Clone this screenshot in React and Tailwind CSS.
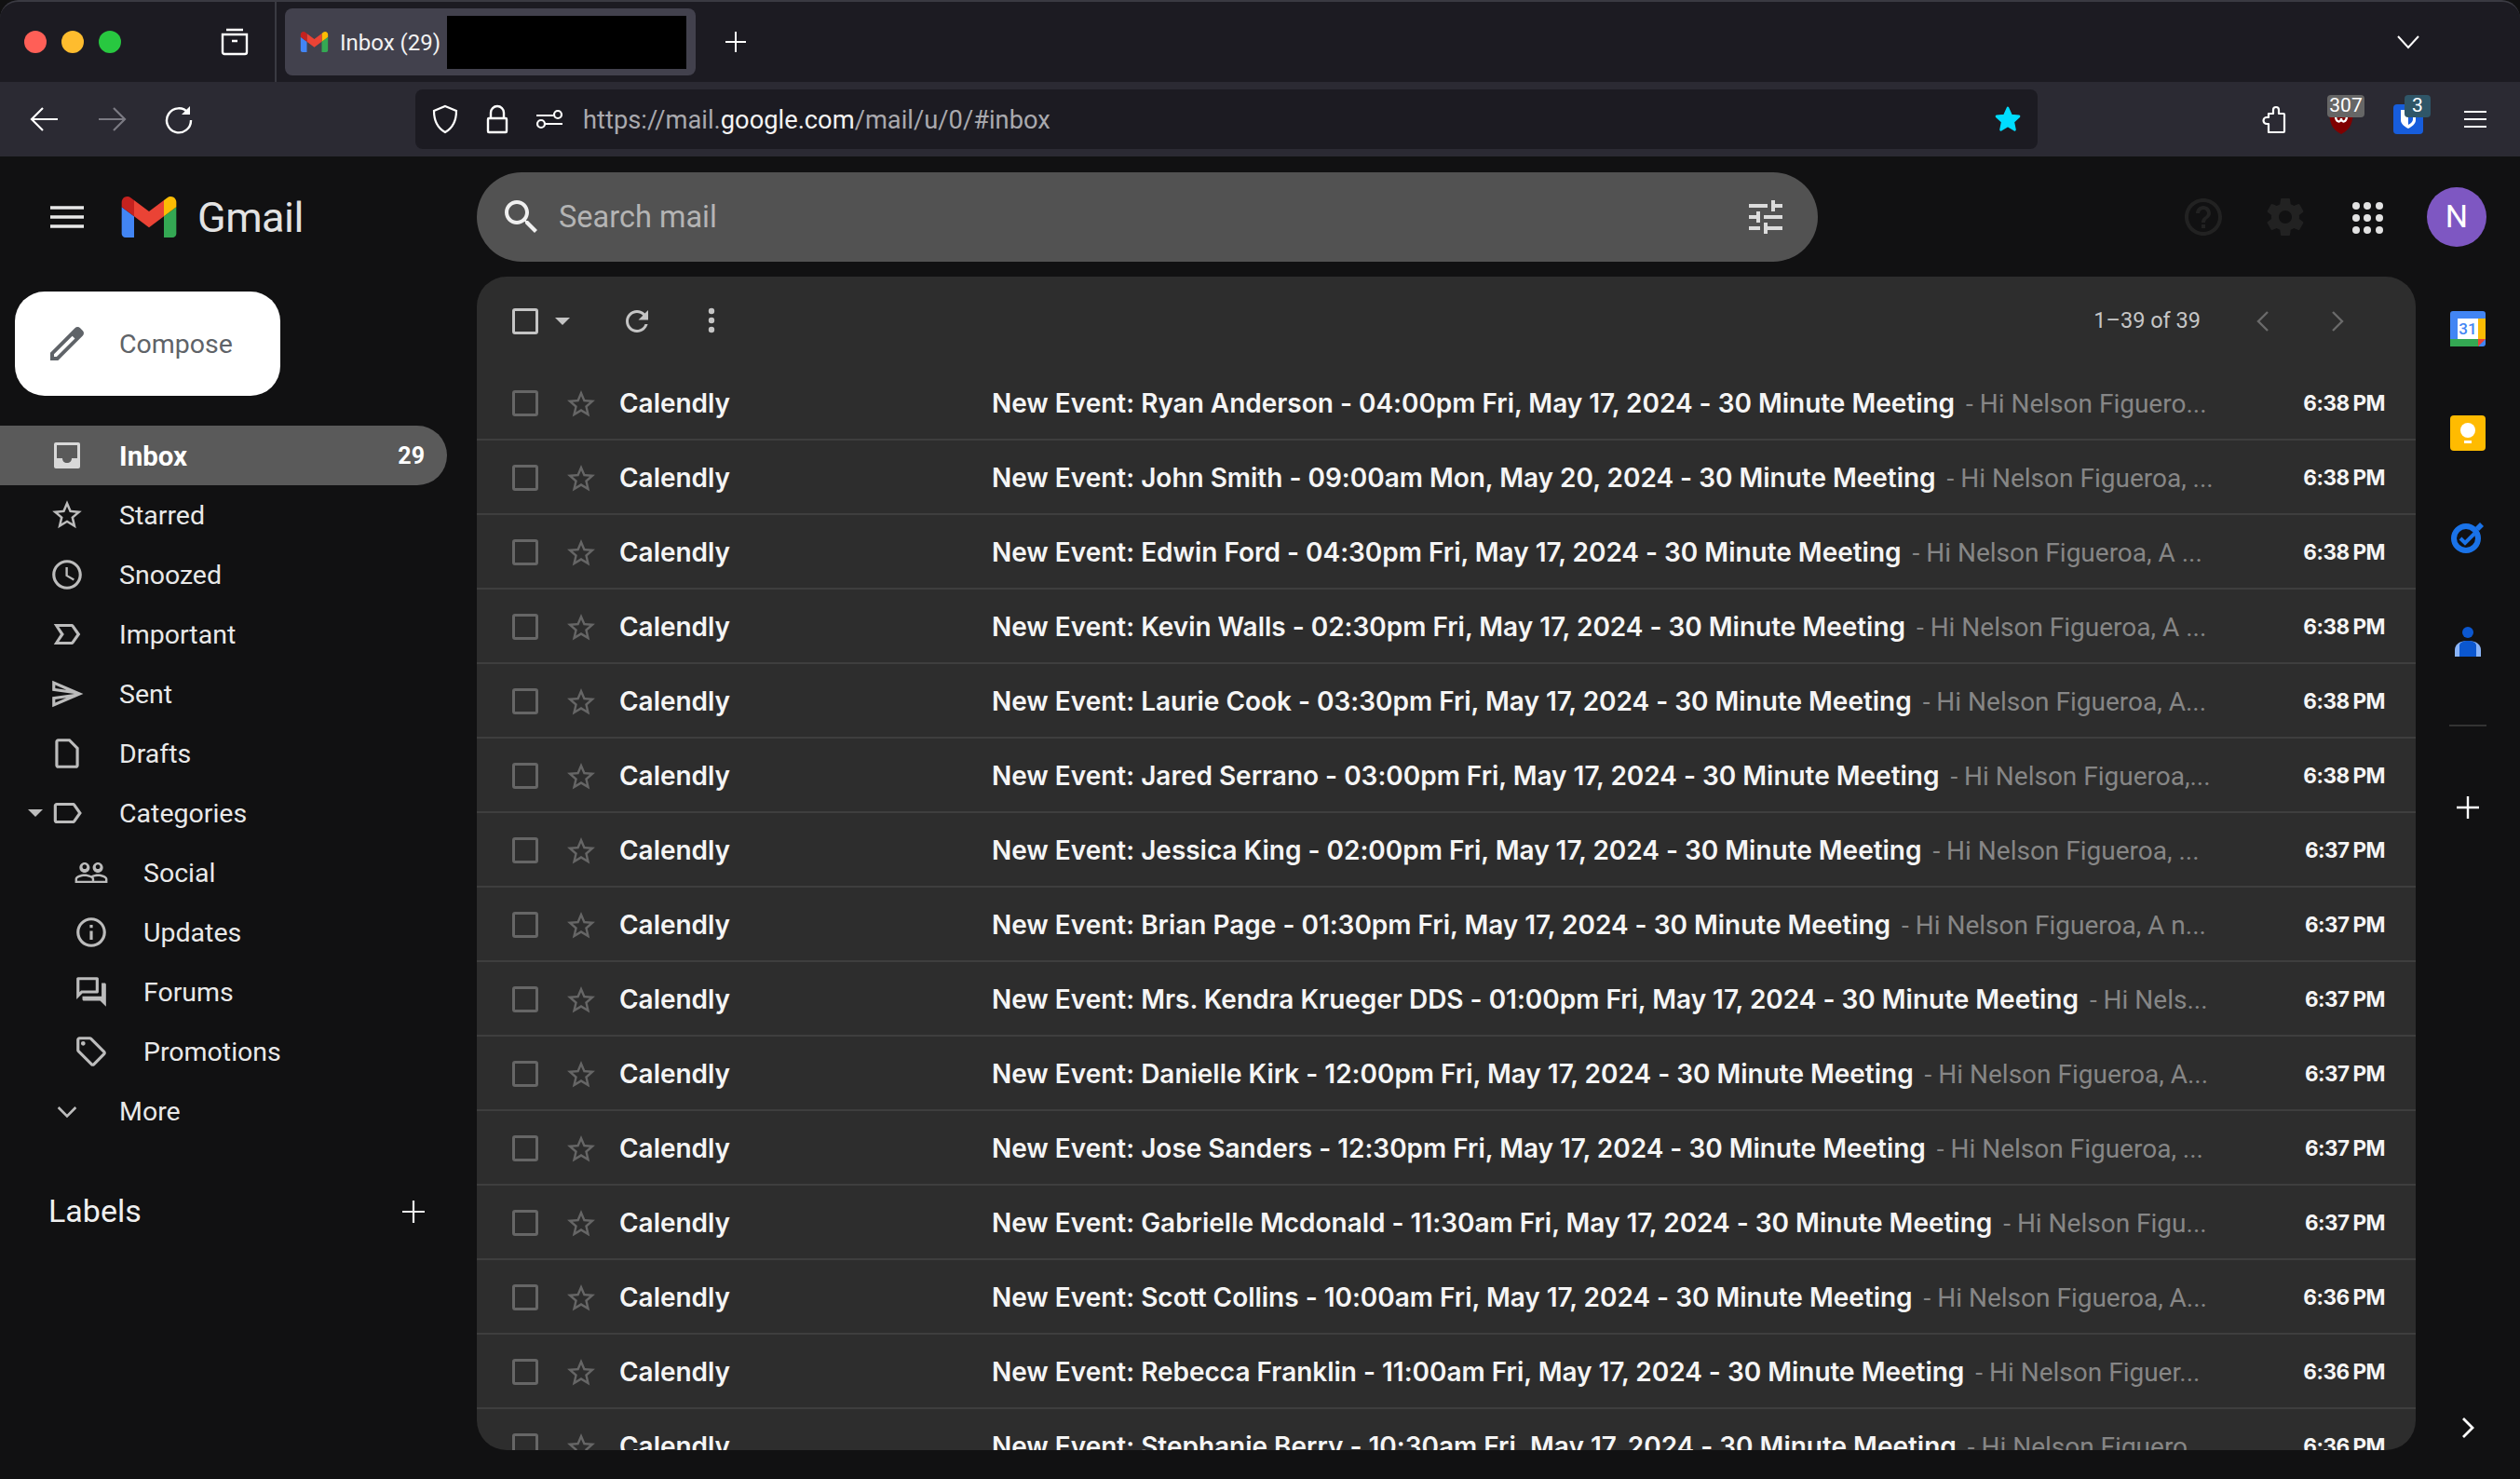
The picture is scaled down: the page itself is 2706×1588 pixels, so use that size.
import { useState } from 'react';

const SANS = 'font-["Roboto","Liberation_Sans",sans-serif]';
const BOLD = 'font-["Inter","Roboto",sans-serif]';

// Material icon paths used by the sidebar and toolbars
const PATHS = {
  star: 'M22 9.24l-7.19-.62L12 2 9.19 8.63 2 9.24l5.46 4.73L5.82 21 12 17.27 18.18 21l-1.63-7.03L22 9.24zM12 15.4l-3.76 2.27 1-4.28-3.32-2.88 4.38-.38L12 6.1l1.71 4.04 4.38.38-3.32 2.88 1 4.28L12 15.4z',
  clock: 'M11.99 2C6.47 2 2 6.48 2 12s4.47 10 9.99 10C17.52 22 22 17.52 22 12S17.52 2 11.99 2zM12 20c-4.42 0-8-3.58-8-8s3.58-8 8-8 8 3.58 8 8-3.58 8-8 8zm.5-13H11v6l5.25 3.15.75-1.23-4.5-2.67z',
  important: 'M15 19H3l4.5-7L3 5h12c.65 0 1.26.31 1.63.84L21 12l-4.37 6.16c-.37.52-.98.84-1.63.84zm-8.5-2H15l3.5-5L15 7H6.5l3.5 5-3.5 5z',
  sent: 'M4.01 6.03l7.51 3.22-7.52-1 .01-2.22m7.5 8.72L4 17.97v-2.22l7.51-1M2.01 3L2 10l15 2-15 2 .01 7L23 12 2.01 3z',
  draft: 'M14 2H6c-1.1 0-2 .9-2 2v16c0 1.1.9 2 2 2h12c1.1 0 2-.9 2-2V8l-6-6zm4 18H6V4h7.17L18 8.83V20z',
  label: 'M17.63 5.84C17.27 5.33 16.67 5 16 5L5 5.01C3.9 5.01 3 5.9 3 7v10c0 1.1.9 1.99 2 1.99L16 19c.67 0 1.27-.33 1.63-.84L22 12l-4.37-6.16zM16 17H5V7h11l3.55 5L16 17z',
  people: 'M16.5 13c-1.2 0-3.07.34-4.5 1-1.43-.67-3.3-1-4.5-1C5.33 13 1 14.08 1 16.25V19h22v-2.75c0-2.17-4.33-3.25-6.5-3.25zm-4 4.5h-10v-1.25c0-.54 2.56-1.75 5-1.75s5 1.21 5 1.75v1.25zm9 0H14v-1.25c0-.46-.2-.86-.52-1.22.88-.3 1.96-.53 3.02-.53 2.44 0 5 1.21 5 1.75v1.25zM7.5 12c1.93 0 3.5-1.57 3.5-3.5S9.43 5 7.5 5 4 6.57 4 8.5 5.57 12 7.5 12zm0-5.5c.83 0 1.5.67 1.5 1.5s-.67 1.5-1.5 1.5S6 8.83 6 8s.67-1.5 1.5-1.5zm9 5.5c1.93 0 3.5-1.57 3.5-3.5S18.43 5 16.5 5 13 6.57 13 8.5s1.57 3.5 3.5 3.5zm0-5.5c.83 0 1.5.67 1.5 1.5s-.67 1.5-1.5 1.5S15 8.83 15 8s.67-1.5 1.5-1.5z',
  info: 'M11 7h2v2h-2zm0 4h2v6h-2zm1-9C6.48 2 2 6.48 2 12s4.48 10 10 10 10-4.48 10-10S17.52 2 12 2zm0 18c-4.41 0-8-3.59-8-8s3.59-8 8-8 8 3.59 8 8-3.59 8-8 8z',
  forum: 'M15 4v7H5.17L4 12.17V4h11m1-2H3c-.55 0-1 .45-1 1v14l4-4h10c.55 0 1-.45 1-1V3c0-.55-.45-1-1-1zm5 4h-2v9H6v2c0 .55.45 1 1 1h11l4 4V7c0-.55-.45-1-1-1z',
  offer: 'M21.41 11.58l-9-9C12.05 2.22 11.55 2 11 2H4c-1.1 0-2 .9-2 2v7c0 .55.22 1.05.59 1.42l9 9c.36.36.86.58 1.41.58s1.05-.22 1.41-.59l7-7c.37-.36.59-.86.59-1.41s-.23-1.06-.59-1.42zM13 20.01L4 11V4h7v-.01l9 9-7 7.02zM6.5 5A1.5 1.5 0 1 0 6.5 8 1.5 1.5 0 1 0 6.5 5z',
  search: 'M15.5 14h-.79l-.28-.27C15.41 12.59 16 11.11 16 9.5 16 5.91 13.09 3 9.5 3S3 5.91 3 9.5 5.91 16 9.5 16c1.61 0 3.09-.59 4.23-1.57l.27.28v.79l5 4.99L20.49 19l-4.99-5zm-6 0C7.01 14 5 11.99 5 9.5S7.01 5 9.5 5 14 7.01 14 9.5 11.99 14 9.5 14z',
  tune: 'M3 17v2h6v-2H3zM3 5v2h10V5H3zm10 16v-2h8v-2h-8v-2h-2v6h2zM7 9v2H3v2h4v2h2V9H7zm14 4v-2H11v2h10zm-6-4h2V7h4V5h-4V3h-2v6z',
  refresh: 'M17.65 6.35C16.2 4.9 14.21 4 12 4c-4.42 0-7.99 3.58-7.99 8s3.57 8 7.99 8c3.73 0 6.84-2.55 7.73-6h-2.08c-.82 2.33-3.04 4-5.65 4-3.31 0-6-2.69-6-6s2.69-6 6-6c1.66 0 3.14.69 4.22 1.78L13 11h7V4l-2.35 2.35z',
  pencil: 'M20.41 4.94l-1.35-1.35c-.78-.78-2.05-.78-2.83 0L3 16.82V21h4.18L20.41 7.77c.79-.78.79-2.05 0-2.83zm-14 14.12L5 19v-1.36l9.82-9.82 1.41 1.41-9.82 9.83z',
  help: 'M11 18h2v-2h-2v2zm1-16C6.48 2 2 6.48 2 12s4.48 10 10 10 10-4.48 10-10S17.52 2 12 2zm0 18c-4.41 0-8-3.59-8-8s3.59-8 8-8 8 3.59 8 8-3.59 8-8 8zm0-14c-2.21 0-4 1.79-4 4h2c0-1.1.9-2 2-2s2 .9 2 2c0 2-3 1.75-3 5h2c0-2.25 3-2.5 3-5 0-2.21-1.79-4-4-4z',
  gear: 'M19.43 12.98c.04-.32.07-.64.07-.98s-.03-.66-.07-.98l2.11-1.65c.19-.15.24-.42.12-.64l-2-3.46c-.12-.22-.39-.3-.61-.22l-2.49 1c-.52-.4-1.08-.73-1.69-.98l-.38-2.65C14.46 2.18 14.25 2 14 2h-4c-.25 0-.46.18-.49.42l-.38 2.65c-.61.25-1.17.59-1.69.98l-2.49-1c-.23-.09-.49 0-.61.22l-2 3.46c-.13.22-.07.49.12.64l2.11 1.65c-.04.32-.07.65-.07.98s.03.66.07.98l-2.11 1.65c-.19.15-.24.42-.12.64l2 3.46c.12.22.39.3.61.22l2.49-1c.52.4 1.08.73 1.69.98l.38 2.65c.03.24.24.42.49.42h4c.25 0 .46-.18.49-.42l.38-2.65c.61-.25 1.17-.59 1.69-.98l2.49 1c.23.09.49 0 .61-.22l2-3.46c.12-.22.07-.49-.12-.64l-2.11-1.65zM12 15.5c-1.93 0-3.5-1.57-3.5-3.5s1.57-3.5 3.5-3.5 3.5 1.57 3.5 3.5-1.57 3.5-3.5 3.5z',
};

function Icon({ name, className = '' }) {
  return (
    <svg viewBox="0 0 24 24" className={className} fill="currentColor">
      <path d={PATHS[name]} />
    </svg>
  );
}

function GmailLogo({ className }) {
  return (
    <svg viewBox="52 42 88 66" className={className}>
      <path fill="#4285f4" d="M58 108h14V74L52 59v43c0 3.32 2.69 6 6 6" />
      <path fill="#34a853" d="M120 108h14c3.32 0 6-2.69 6-6V59l-20 15" />
      <path fill="#fbbc04" d="M120 48v26l20-15v-8c0-7.42-8.47-11.65-14.4-7.2" />
      <path fill="#ea4335" d="M72 74V48l24 18 24-18v26L96 92" />
      <path fill="#c5221f" d="M52 51v8l20 15V48l-5.6-4.2c-5.94-4.45-14.4-.22-14.4 7.2" />
    </svg>
  );
}

const EMAILS = [
  ['Ryan Anderson - 04:00pm Fri, May 17, 2024', 'Hi Nelson Figuero...', '6:38 PM'],
  ['John Smith - 09:00am Mon, May 20, 2024', 'Hi Nelson Figueroa, ...', '6:38 PM'],
  ['Edwin Ford - 04:30pm Fri, May 17, 2024', 'Hi Nelson Figueroa, A ...', '6:38 PM'],
  ['Kevin Walls - 02:30pm Fri, May 17, 2024', 'Hi Nelson Figueroa, A ...', '6:38 PM'],
  ['Laurie Cook - 03:30pm Fri, May 17, 2024', 'Hi Nelson Figueroa, A...', '6:38 PM'],
  ['Jared Serrano - 03:00pm Fri, May 17, 2024', 'Hi Nelson Figueroa,...', '6:38 PM'],
  ['Jessica King - 02:00pm Fri, May 17, 2024', 'Hi Nelson Figueroa, ...', '6:37 PM'],
  ['Brian Page - 01:30pm Fri, May 17, 2024', 'Hi Nelson Figueroa, A n...', '6:37 PM'],
  ['Mrs. Kendra Krueger DDS - 01:00pm Fri, May 17, 2024', 'Hi Nels...', '6:37 PM'],
  ['Danielle Kirk - 12:00pm Fri, May 17, 2024', 'Hi Nelson Figueroa, A...', '6:37 PM'],
  ['Jose Sanders - 12:30pm Fri, May 17, 2024', 'Hi Nelson Figueroa, ...', '6:37 PM'],
  ['Gabrielle Mcdonald - 11:30am Fri, May 17, 2024', 'Hi Nelson Figu...', '6:37 PM'],
  ['Scott Collins - 10:00am Fri, May 17, 2024', 'Hi Nelson Figueroa, A...', '6:36 PM'],
  ['Rebecca Franklin - 11:00am Fri, May 17, 2024', 'Hi Nelson Figuer...', '6:36 PM'],
  ['Stephanie Berry - 10:30am Fri, May 17, 2024', 'Hi Nelson Figuero...', '6:36 PM'],
];

const NAV = [
  { label: 'Starred', icon: 'star' },
  { label: 'Snoozed', icon: 'clock' },
  { label: 'Important', icon: 'important' },
  { label: 'Sent', icon: 'sent' },
  { label: 'Drafts', icon: 'draft' },
  { label: 'Categories', icon: 'label', caret: true },
  { label: 'Social', icon: 'people', sub: true },
  { label: 'Updates', icon: 'info', sub: true },
  { label: 'Forums', icon: 'forum', sub: true },
  { label: 'Promotions', icon: 'offer', sub: true },
];

function TabBar() {
  return (
    <div className="flex h-[88px] shrink-0 items-center rounded-t-[20px] border-t-2 border-[#3a3a42] bg-[#1c1b22] text-white">
      <div className="flex w-[297px] shrink-0 items-center self-stretch border-r-2 border-[#3a3a42] pl-[26px]">
        <span className="h-6 w-6 rounded-full bg-[#ff5f57]" />
        <span className="ml-4 h-6 w-6 rounded-full bg-[#febc2e]" />
        <span className="ml-4 h-6 w-6 rounded-full bg-[#28c840]" />
        <svg viewBox="0 0 32 32" className="ml-[106px] h-8 w-8" fill="none" stroke="currentColor" strokeWidth="2.4">
          <path d="M7 3h18M3 8h26v19a2 2 0 0 1-2 2H5a2 2 0 0 1-2-2zM13 15h6" />
        </svg>
      </div>
      <div className="ml-[9px] flex h-[72px] w-[441px] items-center rounded-lg bg-[#42414d] pl-4 pr-[10px]">
        <GmailLogo className="h-[22px] w-[31px] shrink-0" />
        <span className={`${SANS} ml-3 pt-[2px] text-[24px] whitespace-nowrap text-[#f2f2f2]`}>Inbox (29)</span>
        <div className="ml-auto h-[57px] w-[257px] bg-black" />
      </div>
      <svg viewBox="0 0 24 24" className="ml-[31px] h-[24px] w-[24px]" fill="none" stroke="currentColor" strokeWidth="2">
        <path d="M12 1v22M1 12h22" />
      </svg>
      <svg viewBox="0 0 24 24" className="mr-[108px] ml-auto h-[24px] w-[24px]" fill="none" stroke="currentColor" strokeWidth="2">
        <path d="M1 6l11 12L23 6" />
      </svg>
    </div>
  );
}

function AddressBar() {
  return (
    <div className="flex h-[80px] shrink-0 items-center bg-[#2b2a33] text-white">
      <svg viewBox="0 0 32 32" className="ml-[32px] h-8 w-8" fill="none" stroke="currentColor" strokeWidth="2.2">
        <path d="M30 16H3M14 4L2 16l12 12" />
      </svg>
      <svg viewBox="0 0 32 32" className="ml-10 h-8 w-8 text-[#7b7a83]" fill="none" stroke="currentColor" strokeWidth="2.2">
        <path d="M2 16h27M18 4l12 12-12 12" />
      </svg>
      <svg viewBox="0 0 32 32" className="ml-[39px] h-8 w-8" fill="none" stroke="currentColor" strokeWidth="2.4">
        <path d="M27 9A13 13 0 1 0 30 17" />
        <path d="M29 2v9H20z" fill="currentColor" stroke="none" />
      </svg>
      <div className="ml-[239px] flex h-16 w-[1742px] items-center rounded-lg bg-[#1c1b22]">
        <svg viewBox="0 0 32 32" className="ml-4 h-8 w-8" fill="none" stroke="currentColor" strokeWidth="2.2">
          <path d="M16 2l12 5c0 10-3 18-12 23C7 25 4 17 4 7z" />
        </svg>
        <svg viewBox="0 0 32 32" className="ml-6 h-8 w-8" fill="none" stroke="currentColor" strokeWidth="2.4">
          <path d="M9 15V9a7 7 0 0 1 14 0v6M7 15h18a1 1 0 0 1 1 1v13a1 1 0 0 1-1 1H7a1 1 0 0 1-1-1V16a1 1 0 0 1 1-1z" />
        </svg>
        <svg viewBox="0 0 32 32" className="ml-6 h-8 w-8" fill="none" stroke="currentColor" strokeWidth="2.2">
          <path d="M2 12h18M12 21h18" />
          <circle cx="25" cy="11" r="4" />
          <circle cx="7" cy="21" r="4" />
        </svg>
        <span className={`${SANS} ml-[20px] pt-[2px] text-[27.3px] whitespace-nowrap text-[#a9a9ae]`}>
          https://mail.<span className="text-[#f3f3f3]">google.com</span>/mail/u/0/#inbox
        </span>
        <svg viewBox="0 0 24 24" className="mr-4 ml-auto h-8 w-8 text-[#00ddff]" fill="currentColor" stroke="currentColor" strokeWidth="2" strokeLinejoin="round">
          <path d="M12 3l2.7 6 6.3.7-4.7 4.3 1.3 6.5-5.6-3.3-5.6 3.3 1.3-6.5L3 9.7 9.3 9z" />
        </svg>
      </div>
      <svg viewBox="0 0 32 32" className="ml-[238px] h-8 w-8" fill="none" stroke="currentColor" strokeWidth="2.2" strokeLinejoin="round">
        <path d="M10 30V21H8a3.5 3.5 0 0 1 0-7h2v-4h5V6a3 3 0 0 1 6 0v4h5a1 1 0 0 1 1 1v18a1 1 0 0 1-1 1z" />
      </svg>
      <div className="relative ml-[40px] h-8 w-8">
        <svg viewBox="0 0 32 32" className="h-8 w-8">
          <path d="M16 32C6 27 3 20 3 4h26c0 16-3 23-13 28z" fill="#7f0000" />
          <path d="M10 12c0 8 6 8 6 3 0 5 6 5 6-3" fill="none" stroke="#fff" strokeWidth="2.4" />
        </svg>
        <span className={`${SANS} absolute -top-[10px] left-[1px] flex h-6 w-10 items-center justify-center rounded-sm bg-[#666] text-[21px] text-white`}>307</span>
      </div>
      <div className="relative ml-[40px] h-8 w-8">
        <div className="flex h-8 w-8 items-center justify-center rounded bg-[#175ddc]">
          <svg viewBox="0 0 24 24" className="h-6 w-6" fill="#fff">
            <path d="M4 2h16v11c0 4-4 7-8 9-4-2-8-5-8-9zm8 3v13c2-1 5-3 5-6V5z" />
          </svg>
        </div>
        <span className={`${SANS} absolute -top-[10px] left-[12px] flex h-6 w-7 items-center justify-center rounded-sm bg-[#2f5668] text-[21px] text-white`}>3</span>
      </div>
      <svg viewBox="0 0 24 24" className="ml-[44px] h-[24px] w-[24px]" fill="none" stroke="currentColor" strokeWidth="2.2">
        <path d="M0 4h24M0 12h24M0 20h24" />
      </svg>
    </div>
  );
}

function GmailHeader() {
  return (
    <div className="flex h-[129px] shrink-0 items-center">
      <div className="flex w-[512px] shrink-0 items-center">
        <svg viewBox="0 0 36 24" className="ml-[54px] h-6 w-9 text-[#e8e8e8]" fill="none" stroke="currentColor" strokeWidth="3.6">
          <path d="M0 2h36M0 12h36M0 22h36" />
        </svg>
        <GmailLogo className="ml-10 h-[44px] w-[60px]" />
        <span className={`${SANS} ml-[22px] pt-[2px] text-[45px] leading-none tracking-[-0.5px] text-[#e3e3e3]`}>Gmail</span>
      </div>
      <div className="flex h-24 w-[1440px] items-center rounded-[48px] bg-[#525252]">
        <Icon name="search" className="ml-[24px] h-[48px] w-[48px] text-[#f0f0f0]" />
        <span className={`${SANS} ml-[16px] pt-[2px] text-[32.5px] text-[#b4b4b4]`}>Search mail</span>
        <Icon name="tune" className="mr-[32px] ml-auto h-[48px] w-[48px] text-[#dcdcdc]" />
      </div>
      <Icon name="help" className="ml-[390px] h-[48px] w-[48px] text-[#222]" />
      <Icon name="gear" className="ml-[40px] h-[48px] w-[48px] text-[#222]" />
      <div className="ml-[48px] grid h-8 w-8 grid-cols-3 gap-[5px]">
        {[0, 1, 2, 3, 4, 5, 6, 7, 8].map((i) => (
          <span key={i} className="h-[8px] w-[8px] rounded-full bg-[#e2e2e2]" />
        ))}
      </div>
      <div className={`${SANS} ml-[48px] flex h-16 w-16 items-center justify-center rounded-full bg-[#7e57c2] text-[34px] text-white`}>N</div>
    </div>
  );
}

function Sidebar() {
  return (
    <aside className={`${SANS} w-[512px] shrink-0 pt-4`}>
      <button className="ml-4 flex h-[112px] w-[285px] items-center rounded-[32px] bg-white text-[#5f6368]">
        <Icon name="pencil" className="ml-[32px] h-[48px] w-[48px]" />
        <span className="ml-[32px] pt-[2px] text-[28.5px]">Compose</span>
      </button>
      <div className="mt-8 flex h-16 w-[480px] items-center rounded-r-[32px] bg-[#5a5a5a] text-white">
        <svg viewBox="0 0 28 28" className="ml-[58px] h-7 w-7">
          <path d="M2 0h24a2 2 0 0 1 2 2v24a2 2 0 0 1-2 2H2a2 2 0 0 1-2-2V2a2 2 0 0 1 2-2z" fill="#d8d8d8" />
          <path d="M3 3h22v14h-6c0 3-2 5-5 5s-5-2-5-5H3z" fill="#5a5a5a" />
        </svg>
        <span className="ml-[42px] pt-[2px] text-[29.5px] font-bold">Inbox</span>
        <span className="mr-6 ml-auto pt-[2px] text-[25px] font-bold">29</span>
      </div>
      {NAV.map((item) => (
        <div key={item.label} className="flex h-16 w-[480px] items-center text-[#e9e9e9]">
          {item.caret && (
            <span className="ml-[30px] h-0 w-0 border-x-[8px] border-t-[8px] border-x-transparent border-t-[#bdbdbd]" />
          )}
          <Icon
            name={item.icon}
            className={`h-[38px] w-[38px] shrink-0 text-[#bcbcbc] ${item.sub ? 'ml-[79px]' : item.caret ? 'ml-[7px]' : 'ml-[53px]'}`}
          />
          <span className="ml-[37px] pt-[2px] text-[28.5px]">{item.label}</span>
        </div>
      ))}
      <div className="flex h-16 w-[480px] items-center text-[#e9e9e9]">
        <svg viewBox="0 0 24 24" className="ml-[56px] h-[32px] w-[32px] text-[#bcbcbc]" fill="none" stroke="currentColor" strokeWidth="2">
          <path d="M5 9l7 7 7-7" />
        </svg>
        <span className="ml-[40px] pt-[2px] text-[28.5px]">More</span>
      </div>
      <div className="mt-[50px] flex w-[480px] items-center justify-between pr-[24px] pl-[52px] text-[#f0f0f0]">
        <span className="text-[34px]">Labels</span>
        <svg viewBox="0 0 24 24" className="h-6 w-6" fill="none" stroke="currentColor" strokeWidth="2.2">
          <path d="M12 0v24M0 12h24" />
        </svg>
      </div>
    </aside>
  );
}

function EmailRow({ name, snippet, time }) {
  return (
    <div className="flex h-20 shrink-0 items-center border-b-2 border-[#3e3e3e] pt-[2px] pl-[38px]">
      <span className="h-[28px] w-[28px] shrink-0 rounded-[3px] border-[3px] border-[#666]" />
      <Icon name="star" className="ml-[27px] h-[38px] w-[38px] shrink-0 pt-[2px] text-[#666]" />
      <span className={`${BOLD} ml-[22px] w-[400px] shrink-0 text-[28px] font-semibold tracking-[-0.02px] text-[#f5f5f5]`}>Calendly</span>
      <div className="flex-1 truncate text-[28px]">
        <span className={`${BOLD} font-semibold tracking-[-0.02px] text-[#f5f5f5]`}>New Event: {name} - 30 Minute Meeting</span>
        <span className="ml-[5px] text-[#868686]"> - {snippet}</span>
      </div>
      <span className={`${BOLD} mr-[33px] w-[100px] shrink-0 text-right text-[22.5px] font-bold tracking-[-0.5px] [word-spacing:-1px] whitespace-nowrap text-[#f5f5f5]`}>{time}</span>
    </div>
  );
}

function MailList() {
  return (
    <main className={`${SANS} flex w-[2082px] shrink-0 flex-col overflow-hidden rounded-[32px] bg-[#2d2d2d]`}>
      <div className="flex h-[96px] shrink-0 items-center pl-[38px]">
        <span className="h-[28px] w-[28px] rounded-[3px] border-[3px] border-[#c4c4c4]" />
        <span className="ml-[18px] h-0 w-0 border-x-[8px] border-t-[8px] border-x-transparent border-t-[#c4c4c4]" />
        <Icon name="refresh" className="ml-[54px] h-[36px] w-[36px] text-[#c4c4c4]" />
        <svg viewBox="0 0 8 32" className="ml-[58px] h-8 w-2 text-[#c4c4c4]" fill="currentColor">
          <circle cx="4" cy="5" r="3.2" />
          <circle cx="4" cy="15" r="3.2" />
          <circle cx="4" cy="25" r="3.2" />
        </svg>
        <span className="ml-auto text-[23.5px] text-[#c6c6c6]">1–39 of 39</span>
        <svg viewBox="0 0 14 24" className="ml-[60px] h-6 w-[14px] text-[#6a6a6a]" fill="none" stroke="currentColor" strokeWidth="2.4">
          <path d="M12 2L2 12l10 10" />
        </svg>
        <svg viewBox="0 0 14 24" className="mr-[77px] ml-[66px] h-6 w-[14px] text-[#6a6a6a]" fill="none" stroke="currentColor" strokeWidth="2.4">
          <path d="M2 2l10 10L2 22" />
        </svg>
      </div>
      <div className="flex min-h-0 flex-1 flex-col overflow-hidden">
        {EMAILS.map(([name, snippet, time]) => (
          <EmailRow key={name} name={name} snippet={snippet} time={time} />
        ))}
      </div>
    </main>
  );
}

function RightRail() {
  return (
    <aside className="flex w-[112px] shrink-0 flex-col items-center">
      <div className="flex h-[112px] items-center">
        <svg viewBox="0 0 38 38" className="h-[38px] w-[38px]">
          <rect width="38" height="38" rx="3" fill="#4285f4" />
          <rect x="0" y="30" width="31" height="8" fill="#34a853" />
          <rect x="30" y="8" width="8" height="22" fill="#fbbc04" />
          <rect x="8" y="8" width="22" height="22" fill="#fff" />
          <path d="M30 38v-8h8z" fill="#ea4335" />
          <text x="19" y="25" textAnchor="middle" fontSize="17" fontWeight="500" fontFamily="Roboto" fill="#4285f4">31</text>
        </svg>
      </div>
      <div className="flex h-[112px] items-center">
        <svg viewBox="0 0 38 38" className="h-[38px] w-[38px]">
          <rect width="38" height="38" rx="4" fill="#ffbb00" />
          <circle cx="19" cy="16" r="8" fill="#fff" />
          <rect x="15" y="27" width="8" height="3" fill="#fff" />
        </svg>
      </div>
      <div className="flex h-[112px] items-center">
        <svg viewBox="0 0 36 34" className="h-[34px] w-[36px]" fill="none">
          <circle cx="16" cy="18" r="13" stroke="#1a73e8" strokeWidth="6" />
          <path d="M10 18l5 5 10-10" stroke="#1a73e8" strokeWidth="4" />
          <path d="M26 6l5-5 4 4-5 5z" fill="#1a73e8" />
        </svg>
      </div>
      <div className="flex h-[112px] items-center">
        <svg viewBox="0 0 28 32" className="h-8 w-7">
          <circle cx="14" cy="6" r="6" fill="#0b57d0" />
          <path d="M0 32v-7c0-6 5-10 14-10s14 4 14 10v7z" fill="#8ab4f8" />
          <path d="M5 32V20c0-3 4-5 9-5s9 2 9 5v12z" fill="#0b57d0" />
        </svg>
      </div>
      <div className="mt-[33px] h-[2px] w-10 bg-[#333]" />
      <svg viewBox="0 0 24 24" className="mt-[75px] h-6 w-6 text-white" fill="none" stroke="currentColor" strokeWidth="2.4">
        <path d="M12 0v24M0 12h24" />
      </svg>
      <svg viewBox="0 0 14 24" className="mt-auto mb-[12px] h-6 w-[14px] text-white" fill="none" stroke="currentColor" strokeWidth="2.8">
        <path d="M2 2l10 10L2 22" />
      </svg>
    </aside>
  );
}

export default function App() {
  const [view] = useState('inbox');

  return (
    <div data-view={view} className={`${SANS} flex h-[1588px] w-[2706px] flex-col overflow-hidden bg-[#111112]`}>
      <TabBar />
      <AddressBar />
      <GmailHeader />
      <div className="flex min-h-0 flex-1 pb-[31px]">
        <Sidebar />
        <MailList />
        <RightRail />
      </div>
    </div>
  );
}
